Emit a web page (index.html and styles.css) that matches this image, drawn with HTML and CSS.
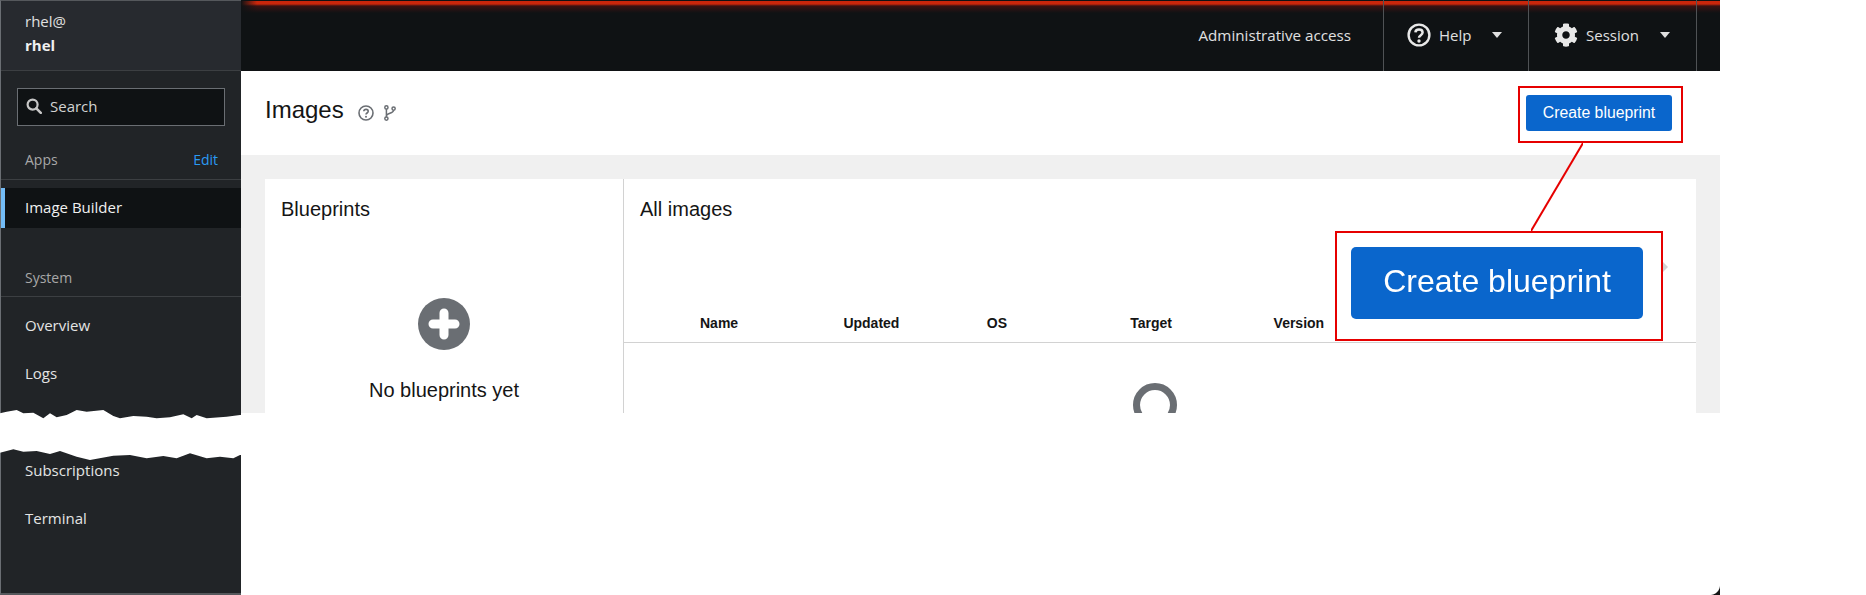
FILE: index.html
```html
<!DOCTYPE html>
<html lang="en">
<head>
    <meta charset="UTF-8">
    <title>Images - Image Builder</title>
    <link rel="stylesheet" href="styles.css">
</head>
<body>
    <div class="window">
        <aside class="sidebar">
            <div class="host">
                <div class="host-user">rhel@</div>
                <div class="host-name">rhel</div>
            </div>
            <div class="search">
                <svg class="search-icon" viewBox="0 0 16 16"><circle cx="6.6" cy="6.6" r="5" fill="none" stroke="currentColor" stroke-width="2.2"/><path d="M10.3 10.3 L14.8 14.8" stroke="currentColor" stroke-width="2.6" stroke-linecap="round"/></svg>
                <span>Search</span>
            </div>
            <div class="nav-title nav-title-apps"><span>Apps</span><a class="edit">Edit</a></div>
            <div class="nav-item active">Image Builder</div>
            <div class="nav-title nav-title-system"><span>System</span></div>
            <div class="nav-item first">Overview</div>
            <div class="nav-item">Logs</div>
            <div class="nav-item after-tear">Subscriptions</div>
            <div class="nav-item">Terminal</div>
        </aside>
        <div class="content">
            <header class="topbar">
                <div class="top-access">Administrative access</div>
                <div class="top-cell top-help">
                    <svg class="top-icon" viewBox="0 0 24 24"><circle cx="12" cy="12" r="10.4" fill="none" stroke="currentColor" stroke-width="2.4"/><path d="M8.4 9.4 C8.6 5.6 15.6 5.6 15.6 9.6 C15.6 12.2 12 12.2 12 14.8" fill="none" stroke="currentColor" stroke-width="2.5"/><circle cx="12" cy="18" r="1.7" fill="currentColor"/></svg>
                    <span>Help</span>
                    <i class="caret"></i>
                </div>
                <div class="top-cell top-session">
                    <svg class="top-icon" viewBox="0 0 512 512"><path fill="currentColor" d="M487.4 315.7l-42.6-24.6c4.3-23.2 4.3-47 0-70.2l42.6-24.6c4.9-2.8 7.1-8.6 5.5-14-11.1-35.6-30-67.8-54.7-94.6-3.8-4.1-10-5.1-14.8-2.3L380.8 110c-17.9-15.4-38.5-27.3-60.8-35.1V25.8c0-5.6-3.9-10.5-9.4-11.7-36.7-8.2-74.3-7.8-109.2 0-5.5 1.2-9.4 6.1-9.4 11.7V75c-22.2 7.9-42.8 19.8-60.8 35.1L88.7 85.5c-4.9-2.8-11-1.9-14.8 2.3-24.7 26.7-43.6 58.9-54.7 94.6-1.7 5.4.6 11.2 5.5 14L67.3 221c-4.3 23.2-4.3 47 0 70.2l-42.6 24.6c-4.9 2.8-7.1 8.6-5.5 14 11.1 35.6 30 67.8 54.7 94.6 3.8 4.1 10 5.1 14.8 2.3l42.6-24.6c17.9 15.4 38.5 27.3 60.8 35.1v49.2c0 5.6 3.9 10.5 9.4 11.7 36.7 8.2 74.3 7.8 109.2 0 5.5-1.2 9.4-6.1 9.4-11.7v-49.2c22.2-7.9 42.8-19.8 60.8-35.1l42.6 24.6c4.9 2.8 11 1.9 14.8-2.3 24.7-26.7 43.6-58.9 54.7-94.6 1.5-5.5-.7-11.3-5.6-14.1zM256 336c-44.1 0-80-35.9-80-80s35.9-80 80-80 80 35.9 80 80-35.9 80-80 80z"/></svg>
                    <span>Session</span>
                    <i class="caret"></i>
                </div>
                <div class="top-cell top-end"></div>
            </header>
            <div class="page-head">
                <h1>Images</h1>
                <svg class="head-help" viewBox="0 0 16 16"><circle cx="8" cy="8" r="7" fill="none" stroke="currentColor" stroke-width="1.6"/><path d="M5.8 6.2 C6 3.8 10.2 3.8 10.2 6.3 C10.2 8 8 8 8 9.6" fill="none" stroke="currentColor" stroke-width="1.6"/><circle cx="8" cy="11.7" r="1" fill="currentColor"/></svg>
                <svg class="head-branch" viewBox="0 0 12 16"><g fill="none" stroke="currentColor" stroke-width="1.5"><circle cx="2.4" cy="2.4" r="1.6"/><circle cx="9.6" cy="3.6" r="1.6"/><circle cx="2.4" cy="13.6" r="1.6"/><path d="M2.4 4 V12 M9.6 5.2 C9.6 8.4 2.4 8 2.4 11"/></g></svg>
                <button class="primary">Create blueprint</button>
            </div>
            <main class="main">
                <div class="panels">
                    <section class="panel panel-blueprints">
                        <h2>Blueprints</h2>
                        <div class="empty">
                            <svg class="plus" viewBox="0 0 52 52"><circle cx="26" cy="26" r="26" fill="#6a6e73"/><path d="M26 15 V37 M15 26 H37" stroke="#fff" stroke-width="9" stroke-linecap="round"/></svg>
                            <p>No blueprints yet</p>
                        </div>
                    </section>
                    <section class="panel panel-images">
                        <h2>All images</h2>
                        <div class="table-head">
                            <span>Name</span>
                            <span>Updated</span>
                            <span>OS</span>
                            <span>Target</span>
                            <span>Version</span>
                        </div>
                        <div class="spinner"></div>
                    </section>
                </div>
            </main>
        </div>
        <!-- torn edge of the screenshot -->
        <svg class="tear" viewBox="0 360 795 165" preserveAspectRatio="none"><polygon fill="#fff" points="0,370 20,365 50,360 70,370 100,368 130,385 150,370 170,382 200,375 230,360 260,365 310,360 340,378 360,385 400,378 440,380 470,385 510,382 550,373 575,385 590,375 620,385 680,380 720,375 795,370 795,495 720,495 700,505 660,500 620,505 570,490 530,505 490,498 440,505 390,495 340,497 270,510 230,500 180,483 150,492 110,483 70,485 40,478 0,488"/></svg>
        <!-- annotation -->
        <div class="mark-small"></div>
        <svg class="mark-line" viewBox="0 0 52 88"><path d="M52 0 L0 88" stroke="#e60000" stroke-width="2"/></svg>
        <div class="mark-big">
            <div class="big-button"><span>Create blueprint</span></div>
        </div>
        <i class="chevron"></i>
        <div class="corner"></div>
    </div>
</body>
</html>
```

FILE: styles.css
```css
body { margin: 0; background: #fff; font-family: "Liberation Sans", Arial, sans-serif; color: #151515; }
.window { position: relative; display: flex; width: 1720px; height: 595px; overflow: hidden; }

/* sidebar */
.sidebar { width: 241px; flex: none; box-sizing: border-box; height: 595px; background: #212427; border-left: 1px solid #6a6e73; border-top: 1px solid #55585c; border-bottom: 2px solid #55585c; font-family: "Open Sans", sans-serif; font-size: 15px; color: #e0e0e0; }
.host { height: 70px; box-sizing: border-box; padding: 8px 24px 0; background: #272a2f; border-bottom: 1px solid #3c3f42; line-height: 24px; }
.host-name { font-weight: 700; color: #f0f0f0; }
.search { display: flex; align-items: center; gap: 8px; height: 38px; box-sizing: border-box; margin: 17px 16px 0; padding: 0 0 3px 8px; background: #0f1214; border: 1px solid #6a6e73; color: #d2d2d2; }
.search-icon { width: 16px; height: 16px; color: #c7c7c7; }
.nav-title { display: flex; justify-content: space-between; align-items: center; box-sizing: border-box; padding: 0 23px 0 24px; border-bottom: 1px solid #3c3f42; font-size: 14px; color: #a8a8a8; }
.nav-title-apps { height: 54px; padding-top: 14px; }
.nav-title-system { height: 69px; padding-top: 31px; }
.edit { color: #2b9af3; }
.nav-item { display: flex; align-items: center; box-sizing: border-box; height: 48px; padding-left: 24px; color: #e4e4e4; }
.nav-item.active { height: 40px; margin-top: 8px; padding: 0 0 2px 20px; background: #0f1214; border-left: 4px solid #73bcf7; color: #f0f0f0; }
.nav-item.first { margin-top: 4px; }
.nav-item.after-tear { margin-top: 49px; }

/* top bar */
.content { flex: 1; min-width: 0; }
.topbar { position: relative; display: flex; align-items: center; justify-content: flex-end; height: 71px; background: linear-gradient(#0f1214 1px, #c9260b 1px, #c9260b 4px, #3a1212 6px, #0f1214 13px); font-family: "Open Sans", sans-serif; font-size: 15px; color: #e0e0e0; }
.topbar::before { content: ""; position: absolute; left: 0; top: 0; width: 16px; height: 14px; background: linear-gradient(90deg, #0f1214, rgba(15, 18, 20, 0)); }
.top-access { margin: 0 32px 2px 0; font-size: 15.2px; }
.top-cell { display: flex; align-items: center; box-sizing: border-box; height: 71px; padding-bottom: 2px; border-left: 1px solid #4f5255; }
.top-help { width: 145px; padding-left: 23px; }
.top-session { width: 168px; padding-left: 25px; }
.top-end { width: 24px; }
.top-icon { width: 24px; height: 24px; margin-right: 8px; color: #e8e8e8; }
.caret { width: 0; height: 0; margin-left: 21px; border-left: 5px solid transparent; border-right: 5px solid transparent; border-top: 6px solid #e0e0e0; }

/* page header */
.page-head { display: flex; align-items: center; height: 84px; box-sizing: border-box; padding: 0 48px 0 24px; background: #fff; }
.page-head h1 { margin: 0 14px 6px 0; font-size: 24px; font-weight: 400; }
.head-help { width: 16px; height: 16px; margin: 0 10px 0 0; color: #6a6e73; }
.head-branch { width: 12px; height: 16px; color: #6a6e73; }
.primary { margin-left: auto; width: 146px; height: 36px; padding: 0; background: #0a66cc; border: none; border-radius: 3px; color: #fff; font-family: inherit; font-size: 15.8px; }

/* main area */
.main { height: 258px; box-sizing: border-box; padding: 24px 24px 0; background: #f0f0f0; overflow: hidden; }
.panels { display: flex; height: 234px; background: #fff; overflow: hidden; }
.panel h2 { margin: 0; font-size: 20px; font-weight: 400; line-height: 24px; }
.panel-blueprints { width: 358px; flex: none; box-sizing: border-box; padding: 18px 16px; }
.panel-images { flex: 1; box-sizing: border-box; padding-top: 18px; border-left: 1px solid #d2d2d2; }
.panel-images h2 { padding-left: 16px; }
.empty { display: flex; flex-direction: column; align-items: center; margin-top: 77px; }
.plus { width: 52px; height: 52px; }
.empty p { margin: 28px 0 0; font-size: 20px; line-height: 24px; }
.table-head { display: grid; grid-template-columns: repeat(5, 143.4px); align-items: center; height: 39px; margin-top: 82px; padding-left: 76px; border-bottom: 1px solid #d2d2d2; font-size: 14px; font-weight: 700; }
.spinner { width: 44px; height: 44px; box-sizing: border-box; margin: 40px 0 0 509px; border: 7px solid #6a6e73; border-radius: 50%; }

/* overlays */
.tear { position: absolute; left: 0; top: 410px; width: 265px; height: 55px; }
.mark-small { position: absolute; left: 1518px; top: 86px; width: 165px; height: 57px; box-sizing: border-box; border: 2px solid #e60000; }
.mark-line { position: absolute; left: 1531px; top: 143px; width: 52px; height: 88px; }
.mark-big { position: absolute; left: 1335px; top: 231px; display: flex; align-items: center; justify-content: center; width: 328px; height: 110px; box-sizing: border-box; padding: 0 4px 6px 0; background: #fff; border: 2px solid #e60000; }
.big-button { display: flex; align-items: center; justify-content: center; box-sizing: border-box; width: 292px; height: 72px; padding-bottom: 4px; background: #0a66cc; border-radius: 5px; color: #fff; font-size: 32px; }
.big-button span { filter: blur(0.6px); }
.chevron { position: absolute; left: 1663px; top: 262px; width: 0; height: 0; border-top: 5px solid transparent; border-bottom: 5px solid transparent; border-left: 5px solid #d2d2d2; }
.corner { position: absolute; right: 0; bottom: 0; width: 10px; height: 10px; background: radial-gradient(circle at 0 0, transparent 9.5px, #151515 10.5px); }
```
